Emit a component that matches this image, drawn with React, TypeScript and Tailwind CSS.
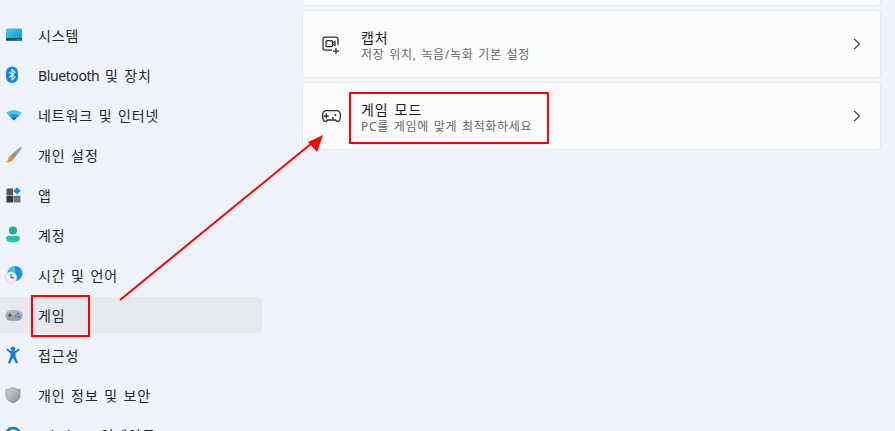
import React from "react";

const font = { fontFamily: '"Noto Sans", "Noto Sans CJK KR", sans-serif' };

const SystemIcon = () => (
  <svg width="18" height="14" viewBox="0 0 18 14">
    <defs><linearGradient id="sy" x1="0" y1="0" x2="1" y2="1"><stop offset="0" stopColor="#45d3e6" /><stop offset="1" stopColor="#1593c4" /></linearGradient></defs>
    <rect x="1" y="0.5" width="16" height="9.5" rx="1" fill="url(#sy)" />
    <rect x="1" y="10" width="16" height="2.8" fill="#0f4f78" />
    <rect x="12" y="11.2" width="1" height="1" fill="#9cc" /><rect x="14.2" y="11.2" width="1" height="1" fill="#9cc" />
  </svg>
);
const BluetoothIcon = () => (
  <svg width="14" height="18" viewBox="0 0 14 18">
    <rect x="1" y="0.5" width="12" height="16.5" rx="6" fill="#0a84f0" />
    <path d="M4 5.8 L10 11.2 L7 14 V3.5 L10 6.3 L4 11.7" fill="none" stroke="#fff" strokeWidth="1.1" />
  </svg>
);
const WifiIcon = () => (
  <svg width="18" height="12" viewBox="0 0 18 12">
    <path d="M1 3.8 Q9 -1.8 17 3.8 L14.6 6.2 Q9 3.4 3.4 6.2 Z" fill="#45c6f0" />
    <path d="M3.4 6.2 Q9 3.4 14.6 6.2 L12 8.8 Q9 7.4 6 8.8 Z" fill="#1b9be0" />
    <path d="M6 8.8 Q9 7.4 12 8.8 L9 11.6 Z" fill="#0d63b8" />
  </svg>
);
const BrushIcon = () => (
  <svg width="18" height="18" viewBox="0 0 18 18">
    <defs><linearGradient id="br" x1="0" y1="1" x2="1" y2="0"><stop offset="0" stopColor="#7f848c" /><stop offset="1" stopColor="#b0b3b8" /></linearGradient></defs>
    <path d="M15.5 0.6 L17.2 2 L9 12.4 L5.6 9.6 Z" fill="url(#br)" />
    <path d="M5.6 9.6 L9 12.4 Q7 16.4 0.8 16.6 Q3.4 14.5 3.4 12.6 Q3.6 10.4 5.6 9.6 Z" fill="#ee8a2c" />
  </svg>
);
const AppIcon = () => (
  <svg width="16" height="16" viewBox="0 0 16 16">
    <rect x="1.5" y="1.5" width="6.5" height="6.8" fill="#50555e" />
    <rect x="1.5" y="8.8" width="6.5" height="6.7" fill="#33373e" />
    <rect x="8.4" y="8.8" width="7" height="6.7" fill="#6f747c" />
    <path d="M12 0.2 L15.7 3.9 L12 7.6 L8.3 3.9 Z" fill="#0f8ae6" />
  </svg>
);
const AccountIcon = () => (
  <svg width="16" height="18" viewBox="0 0 16 18">
    <circle cx="8" cy="4.4" r="4" fill="#1fa99e" />
    <path d="M1 12 Q1 10 3 10 H13 Q15 10 15 12 Q15 16.4 8 16.4 Q1 16.4 1 12 Z" fill="#28c2ac" />
  </svg>
);
const TimeIcon = () => (
  <svg width="18" height="18" viewBox="0 0 18 18">
    <circle cx="10" cy="7.5" r="7.5" fill="#1b93dc" />
    <path d="M10 0 A7.5 7.5 0 0 0 3 5 L10 7.5 Z" fill="#45c4d8" />
    <circle cx="6" cy="11.5" r="5.8" fill="#eceef1" stroke="#b9bdc4" strokeWidth="0.5" />
    <path d="M6 8 V11.8 H9" fill="none" stroke="#3d4148" strokeWidth="1" />
  </svg>
);
const GameIcon = () => (
  <svg width="18" height="13" viewBox="0 0 18 13">
    <defs><linearGradient id="ga" x1="0" y1="0" x2="0" y2="1"><stop offset="0" stopColor="#b8bbc1" /><stop offset="1" stopColor="#94989f" /></linearGradient></defs>
    <rect x="0.5" y="1" width="17" height="10.8" rx="5.2" fill="url(#ga)" />
    <path d="M3.2 6.2 H6.8 M5 4.4 V8" stroke="#3a3e45" strokeWidth="1" />
    <rect x="10" y="6" width="1.7" height="1.7" fill="#1a7fd0" />
    <rect x="12" y="3.8" width="1.7" height="1.7" fill="#1a7fd0" />
    <rect x="13" y="7" width="1.7" height="1.7" fill="#1a7fd0" />
  </svg>
);
const AccessIcon = () => (
  <svg width="16" height="18" viewBox="0 0 16 18">
    <circle cx="8" cy="2.7" r="2.2" fill="#0e7fd6" />
    <path d="M1.2 3.8 L2 2.6 L6 5 H10 L14 2.6 L14.8 3.8 L10.4 7.6 L10.6 10.4 L13 17 L11 17.6 L8 11.6 L5 17.6 L3 17 L5.4 10.4 L5.6 7.6 Z" fill="#0e7fd6" />
  </svg>
);
const ShieldIcon = () => (
  <svg width="16" height="17" viewBox="0 0 16 17">
    <defs><linearGradient id="sh" x1="0" y1="0" x2="1" y2="1"><stop offset="0" stopColor="#d0d3d7" /><stop offset="0.5" stopColor="#aeb1b6" /><stop offset="1" stopColor="#7f838a" /></linearGradient></defs>
    <path d="M8 0.6 Q11 2.6 15 2.6 V8 Q15 13.4 8 16 Q1 13.4 1 8 V2.6 Q5 2.6 8 0.6 Z" fill="url(#sh)" stroke="#7b7f86" strokeWidth="0.6" />
  </svg>
);
const UpdateIcon = () => (
  <svg width="16" height="16" viewBox="0 0 16 16"><circle cx="8" cy="8" r="7" fill="none" stroke="#0e7fd6" strokeWidth="2.6" /></svg>
);

const items: { label: React.ReactNode; key: string; icon: React.ReactNode; active?: boolean }[] = [
  { key: "a", label: "시스템", icon: <SystemIcon /> },
  { key: "b", label: <><span className="tracking-[-0.4px]">Bluetooth</span> 및 장치</>, icon: <BluetoothIcon /> },
  { key: "c", label: "네트워크 및 인터넷", icon: <WifiIcon /> },
  { key: "d", label: "개인 설정", icon: <BrushIcon /> },
  { key: "e", label: "앱", icon: <AppIcon /> },
  { key: "f", label: "계정", icon: <AccountIcon /> },
  { key: "g", label: "시간 및 언어", icon: <TimeIcon /> },
  { key: "h", label: "게임", icon: <GameIcon />, active: true },
  { key: "i", label: "접근성", icon: <AccessIcon /> },
  { key: "j", label: "개인 정보 및 보안", icon: <ShieldIcon /> },
  { key: "k", label: <><span className="tracking-[-0.4px]">Windows</span> 업데이트</>, icon: <UpdateIcon /> },
];

const CaptureIcon = () => (
  <svg width="20" height="20" viewBox="0 0 20 20" fill="none" stroke="#2b2b2b" strokeWidth="1.25">
    <path d="M10 16 H3 Q1 16 1 14 V5 Q1 3 3 3 H14 Q16 3 16 5 V11" />
    <rect x="4" y="6.5" width="6.5" height="6" rx="1" />
    <path d="M10.5 9 L13 7.5 V11.5 L10.5 10" />
    <path d="M14 14 V20 M11 17 H17" />
  </svg>
);
const GamepadIcon = () => (
  <svg width="20" height="16" viewBox="0 0 20 16" fill="none" stroke="#2b2b2b" strokeWidth="1.3">
    <path d="M4.5 2.6 H14.5 Q18.4 2.6 18.4 7.5 Q18.4 13.4 15.6 13.4 Q14.4 13.4 13.4 12 H5.6 Q4.6 13.4 3.4 13.4 Q0.6 13.4 0.6 7.5 Q0.6 2.6 4.5 2.6 Z" />
    <path d="M1.8 8 H6.8 M4.3 5.5 V10.5" />
    <circle cx="10.8" cy="10" r="1" fill="#2b2b2b" stroke="none" />
    <circle cx="13.4" cy="7" r="1" fill="#2b2b2b" stroke="none" />
  </svg>
);
const Chevron = () => (
  <svg width="8" height="12" viewBox="0 0 8 12" fill="none" stroke="#444" strokeWidth="1.2"><path d="M1 0.8 L6.4 6 L1 11.2" /></svg>
);

function Card({ icon, title, sub }: { icon: React.ReactNode; title: string; sub: string }) {
  return (
    <div className="h-[68px] bg-[#fbfcfe] border border-[#e5e8ec] rounded-[4px] flex items-center">
      <div className="w-[58px] pl-[19px] flex items-center shrink-0">{icon}</div>
      <div className="flex flex-col flex-1 pt-[3px]">
        <span className="text-[14px] leading-[17px] tracking-[0.9px] [word-spacing:1.5px] text-[#1b1b1b]">{title}</span>
        <span className="text-[12px] leading-[17px] tracking-[0.68px] [word-spacing:1px] text-[#666666]">{sub}</span>
      </div>
      <div className="pr-[19px]"><Chevron /></div>
    </div>
  );
}

export default function App() {
  return (
    <div style={font} className="relative w-[895px] h-[431px] overflow-hidden bg-[#eff4fa] flex">
      <nav className="w-[262px] shrink-0 pt-[17px] flex flex-col gap-1">
        {items.map((it) => (
          <div key={it.key} className={`h-9 shrink-0 flex items-center rounded-r-[5px] ${it.active ? "bg-[#e6e9ee]" : ""}`}>
            <div className="w-[38px] pl-[5px] flex items-center shrink-0">{it.icon}</div>
            <span className="text-[14px] tracking-[0.9px] [word-spacing:1px] text-[#262626]">{it.label}</span>
          </div>
        ))}
      </nav>
      <main className="ml-[40px] w-[579px] flex flex-col gap-[4px] -mt-[62px]">
        <div className="h-[68px] shrink-0 bg-[#fbfcfe] border border-[#e5e8ec] rounded-[4px]" />
        <Card icon={<CaptureIcon />} title="캡처" sub="저장 위치, 녹음/녹화 기본 설정" />
        <Card icon={<GamepadIcon />} title="게임 모드" sub="PC를 게임에 맞게 최적화하세요" />
      </main>

      <div className="absolute left-[31px] top-[295px] w-[59px] h-[42px] border-2 border-[#ff0000]" />
      <div className="absolute left-[349px] top-[92px] w-[200px] h-[52px] border-2 border-[#ff0000]" />
      <svg className="absolute left-0 top-0 pointer-events-none" width="895" height="431" viewBox="0 0 895 431">
        <line x1="120" y1="300" x2="312" y2="143" stroke="#ff0000" strokeWidth="2" />
        <polygon points="323,135 308,142 317,152" fill="#ff0000" />
      </svg>
    </div>
  );
}
